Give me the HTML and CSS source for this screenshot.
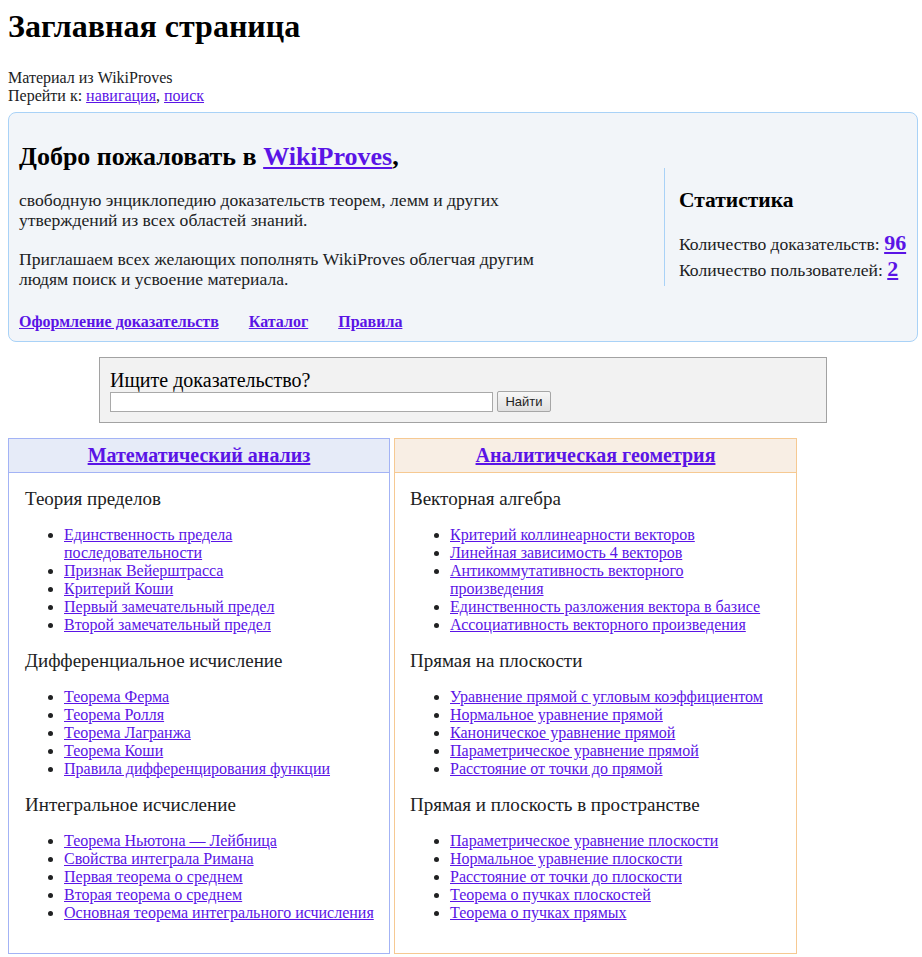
FILE: index.html
```html
<!DOCTYPE html>
<html lang="ru">
<head>
<meta charset="utf-8">
<title>Заглавная страница — WikiProves</title>
<link rel="stylesheet" href="styles.css">
</head>
<body>
<div class="page">
  <h1 class="page-title">Заглавная страница</h1>
  <div class="sub">
    <div>Материал из WikiProves</div>
    <div>Перейти к: <a href="#">навигация</a>, <a href="#">поиск</a></div>
  </div>

  <div class="welcome">
    <div class="welcome-main">
      <h2 class="welcome-title">Добро пожаловать в <a href="#">WikiProves</a>,</h2>
      <p class="welcome-text">свободную энциклопедию доказательств теорем, лемм и других утверждений из всех областей знаний.</p>
      <p class="welcome-text">Приглашаем всех желающих пополнять WikiProves облегчая другим людям поиск и усвоение материала.</p>
      <div class="welcome-links">
        <a href="#">Оформление доказательств</a>
        <a href="#">Каталог</a>
        <a href="#">Правила</a>
      </div>
    </div>
    <div class="stats">
      <h3 class="stats-title">Статистика</h3>
      <div class="stats-row">Количество доказательств: <a class="stats-num" href="#">96</a></div>
      <div class="stats-row">Количество пользователей: <a class="stats-num" href="#">2</a></div>
    </div>
  </div>

  <div class="search">
    <div class="search-label">Ищите доказательство?</div>
    <div class="search-row">
      <input class="search-input" type="text">
      <button class="search-btn" type="button">Найти</button>
    </div>
  </div>

  <div class="columns">
    <div class="col col-blue">
      <div class="col-head"><a href="#">Математический анализ</a></div>
      <div class="col-body">
        <div class="sec-title">Теория пределов</div>
        <ul class="sec-list">
          <li><a href="#">Единственность предела последовательности</a></li>
          <li><a href="#">Признак Вейерштрасса</a></li>
          <li><a href="#">Критерий Коши</a></li>
          <li><a href="#">Первый замечательный предел</a></li>
          <li><a href="#">Второй замечательный предел</a></li>
        </ul>
        <div class="sec-title">Дифференциальное исчисление</div>
        <ul class="sec-list">
          <li><a href="#">Теорема Ферма</a></li>
          <li><a href="#">Теорема Ролля</a></li>
          <li><a href="#">Теорема Лагранжа</a></li>
          <li><a href="#">Теорема Коши</a></li>
          <li><a href="#">Правила дифференцирования функции</a></li>
        </ul>
        <div class="sec-title">Интегральное исчисление</div>
        <ul class="sec-list">
          <li><a href="#">Теорема Ньютона — Лейбница</a></li>
          <li><a href="#">Свойства интеграла Римана</a></li>
          <li><a href="#">Первая теорема о среднем</a></li>
          <li><a href="#">Вторая теорема о среднем</a></li>
          <li><a href="#">Основная теорема интегрального исчисления</a></li>
        </ul>
      </div>
    </div>
    <div class="col col-orange">
      <div class="col-head"><a href="#">Аналитическая геометрия</a></div>
      <div class="col-body">
        <div class="sec-title">Векторная алгебра</div>
        <ul class="sec-list">
          <li><a href="#">Критерий коллинеарности векторов</a></li>
          <li><a href="#">Линейная зависимость 4 векторов</a></li>
          <li><a href="#">Антикоммутативность векторного произведения</a></li>
          <li><a href="#">Единственность разложения вектора в базисе</a></li>
          <li><a href="#">Ассоциативность векторного произведения</a></li>
        </ul>
        <div class="sec-title">Прямая на плоскости</div>
        <ul class="sec-list">
          <li><a href="#">Уравнение прямой с угловым коэффициентом</a></li>
          <li><a href="#">Нормальное уравнение прямой</a></li>
          <li><a href="#">Каноническое уравнение прямой</a></li>
          <li><a href="#">Параметрическое уравнение прямой</a></li>
          <li><a href="#">Расстояние от точки до прямой</a></li>
        </ul>
        <div class="sec-title">Прямая и плоскость в пространстве</div>
        <ul class="sec-list">
          <li><a href="#">Параметрическое уравнение плоскости</a></li>
          <li><a href="#">Нормальное уравнение плоскости</a></li>
          <li><a href="#">Расстояние от точки до плоскости</a></li>
          <li><a href="#">Теорема о пучках плоскостей</a></li>
          <li><a href="#">Теорема о пучках прямых</a></li>
        </ul>
      </div>
    </div>
  </div>
</div>
</body>
</html>
```

FILE: styles.css
```css
html, body {
  margin: 0;
  padding: 0;
  background: #ffffff;
}
body {
  font-family: "Liberation Serif", "Times New Roman", serif;
  color: #202122;
}
a {
  color: #5a14e6;
}
.page {
  width: 910px;
  padding: 8px 0 0 8px;
}
.page-title {
  margin: 0;
  font-size: 32px;
  line-height: 37px;
  font-weight: bold;
  color: #000;
}
.sub {
  margin-top: 24px;
  font-size: 16px;
  line-height: 18px;
  color: #202122;
}

.welcome {
  margin-top: 7px;
  height: 228px;
  display: flex;
  border: 1px solid #a9d2f7;
  border-radius: 8px;
  background: #f2f5f9;
  padding: 0 10px;
}
.welcome-main {
  width: 645px;
  padding-top: 29px;
}
.welcome-title {
  margin: 0;
  font-size: 26px;
  line-height: 30px;
  font-weight: bold;
  color: #000;
}
.welcome-text {
  width: 550px;
  margin: 18px 0 0;
  font-size: 17.6px;
  line-height: 20px;
  color: #202122;
}
.welcome-text + .welcome-text {
  margin-top: 19px;
}
.welcome-links {
  margin-top: 24px;
  display: flex;
  gap: 30px;
  font-size: 16px;
  line-height: 18px;
  font-weight: bold;
}
.stats {
  align-self: center;
  box-sizing: border-box;
  height: 118px;
  border-left: 1px solid #a9d2f7;
  padding: 20px 0 0 14px;
}
.stats-title {
  margin: 0 0 19px;
  font-size: 21.5px;
  line-height: 24px;
  font-weight: bold;
  color: #000;
}
.stats-row {
  font-size: 17.6px;
  line-height: 26px;
  height: 26px;
  color: #202122;
}
.stats-num {
  font-size: 22px;
  line-height: 1;
  font-weight: bold;
}

.search {
  width: 706px;
  margin: 15px 0 0 91px;
  border: 1px solid #a2a2a2;
  background: #f2f2f2;
  padding: 11px 10px 10px;
}
.search-label {
  font-size: 20px;
  line-height: 22px;
  color: #000;
}
.search-row {
  display: flex;
  gap: 4px;
  align-items: center;
}
.search-input {
  box-sizing: border-box;
  width: 383px;
  height: 20px;
  margin: 0;
  border: 1px solid #a9a9a9;
  background: #fff;
  padding: 0 2px;
}
.search-btn {
  box-sizing: border-box;
  width: 54px;
  height: 21px;
  margin: 0;
  padding: 0;
  font-family: "Liberation Sans", Arial, sans-serif;
  font-size: 13px;
  color: #222;
  border: 1px solid #a6a6a6;
  border-radius: 2px;
  background: linear-gradient(#f7f7f7, #e0e0e0);
}

.columns {
  margin-top: 15px;
  display: flex;
  gap: 4px;
  align-items: stretch;
}
.col {
  box-sizing: border-box;
  height: 516px;
  border: 1px solid;
}
.col-blue {
  width: 382px;
  border-color: #a3b3f5;
}
.col-orange {
  width: 403px;
  border-color: #f6c992;
}
.col-head {
  height: 34px;
  box-sizing: border-box;
  text-align: center;
  font-size: 20px;
  line-height: 33px;
  font-weight: bold;
  border-bottom: 1px solid;
}
.col-blue .col-head {
  background: #e6ebf8;
  border-color: #a3b3f5;
}
.col-orange .col-head {
  background: #f8eee4;
  border-color: #f6c992;
}
.col-body {
  padding: 15px 15px 0 16px;
}
.col-orange .col-body {
  padding: 15px 28px 0 15px;
}
.sec-title {
  font-size: 19px;
  line-height: 22px;
  color: #202122;
}
.sec-list {
  margin: 16px 0 16px;
  padding-left: 39px;
  font-size: 16px;
  line-height: 18px;
}
.col-orange .sec-list {
  padding-left: 40px;
}
```
